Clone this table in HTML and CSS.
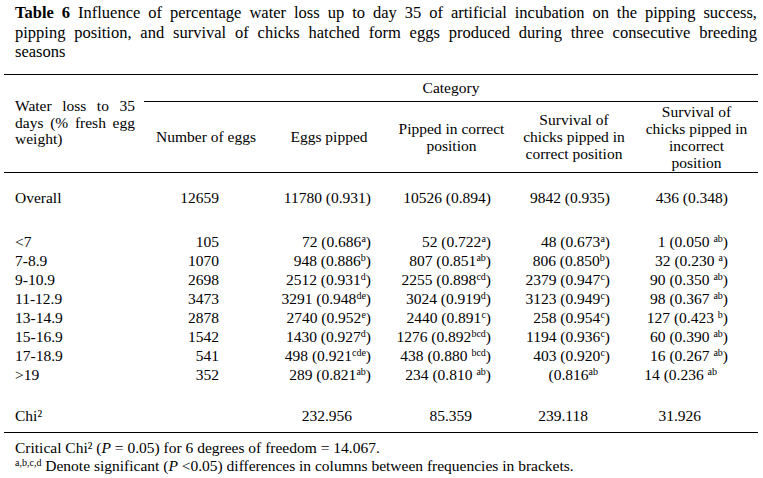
FILE: index.html
```html
<!DOCTYPE html>
<html>
<head>
<meta charset="utf-8">
<link rel="stylesheet" href="styles.css">
</head>
<body>
<div class="caption">
  <div class="jl"><b>Table 6</b> Influence of percentage water loss up to day 35 of artificial incubation on the pipping success,</div>
  <div class="jl">pipping position, and survival of chicks hatched form eggs produced during three consecutive breeding</div>
  <div>seasons</div>
</div>
<div class="table">
  <div class="head">
    <div class="h-first">
      <div class="jl">Water loss to 35</div>
      <div class="jl">days (% fresh egg</div>
      <div>weight)</div>
    </div>
    <div class="h-cat">Category</div>
    <div class="h">Number of eggs</div>
    <div class="h">Eggs pipped</div>
    <div class="h">Pipped in correct<br>position</div>
    <div class="h">Survival of<br>chicks pipped in<br>correct position</div>
    <div class="h">Survival of<br>chicks pipped in<br>incorrect<br>position</div>
  </div>
  <div class="body">
    <div class="row overall"><div>Overall</div><div>12659</div><div>11780 (0.931)</div><div>10526 (0.894)</div><div>9842 (0.935)</div><div>436 (0.348)</div></div>
    <div class="row"><div>&lt;7</div><div>105</div><div>72 (0.686<sup class="s">a</sup>)</div><div>52 (0.722<sup class="s">a</sup>)</div><div>48 (0.673<sup class="s">a</sup>)</div><div>1 (0.050 <sup class="s">ab</sup>)</div></div>
    <div class="row"><div>7-8.9</div><div>1070</div><div>948 (0.886<sup class="s">b</sup>)</div><div>807 (0.851<sup class="s">ab</sup>)</div><div>806 (0.850<sup class="s">b</sup>)</div><div>32 (0.230 <sup class="s">a</sup>)</div></div>
    <div class="row"><div>9-10.9</div><div>2698</div><div>2512 (0.931<sup class="s">d</sup>)</div><div>2255 (0.898<sup class="s">cd</sup>)</div><div>2379 (0.947<sup class="s">c</sup>)</div><div>90 (0.350 <sup class="s">ab</sup>)</div></div>
    <div class="row"><div>11-12.9</div><div>3473</div><div>3291 (0.948<sup class="s">de</sup>)</div><div>3024 (0.919<sup class="s">d</sup>)</div><div>3123 (0.949<sup class="s">c</sup>)</div><div>98 (0.367 <sup class="s">ab</sup>)</div></div>
    <div class="row"><div>13-14.9</div><div>2878</div><div>2740 (0.952<sup class="s">e</sup>)</div><div>2440 (0.891<sup class="s">c</sup>)</div><div>258 (0.954<sup class="s">c</sup>)</div><div>127 (0.423 <sup class="s">b</sup>)</div></div>
    <div class="row"><div>15-16.9</div><div>1542</div><div>1430 (0.927<sup class="s">d</sup>)</div><div>1276 (0.892<sup class="s">bcd</sup>)</div><div>1194 (0.936<sup class="s">c</sup>)</div><div>60 (0.390 <sup class="s">ab</sup>)</div></div>
    <div class="row"><div>17-18.9</div><div>541</div><div>498 (0.921<sup class="s">cde</sup>)</div><div>438 (0.880 <sup class="s">bcd</sup>)</div><div>403 (0.920<sup class="s">c</sup>)</div><div>16 (0.267 <sup class="s">ab</sup>)</div></div>
    <div class="row"><div>&gt;19</div><div>352</div><div>289 (0.821<sup class="s">ab</sup>)</div><div>234 (0.810 <sup class="s">ab</sup>)</div><div class="open5">(0.816<sup class="s">ab</sup></div><div class="open6">14 (0.236 <sup class="s">ab</sup></div></div>
    <div class="row chi"><div>Chi²</div><div></div><div>232.956</div><div>85.359</div><div>239.118</div><div>31.926</div></div>
  </div>
</div>
<div class="foot">
  <div>Critical Chi² (<i>P</i> = 0.05) for 6 degrees of freedom = 14.067.</div>
  <div><sup class="fs">a,b,c,d</sup> Denote significant (<i>P</i> &lt;0.05) differences in columns between frequencies in brackets.</div>
</div>
</body>
</html>
```
FILE: styles.css
```css
body {
  margin: 0;
  width: 763px;
  background: #fff;
  color: #000;
  font-family: "Liberation Serif", "Times New Roman", serif;
}

.caption {
  padding: 3px 6px 0 15px;
  font-size: 16.5px;
  line-height: 19.5px;
}

.jl {
  text-align: justify;
  text-align-last: justify;
}

.table {
  margin: 12px 0 0 4px;
  width: 754px;
  font-size: 15.5px;
}

.head {
  display: grid;
  grid-template-columns: 140px 124px 122px 123px 122px 123px;
  grid-template-rows: 27px 70px;
  border-top: 1px solid #000;
  border-bottom: 1px solid #000;
}

.h-first {
  grid-column: 1;
  grid-row: 1 / span 2;
  display: flex;
  flex-direction: column;
  justify-content: center;
  padding: 0 9px 0 11px;
  line-height: 16.5px;
  white-space: nowrap;
}

.h-cat {
  grid-column: 2 / span 5;
  grid-row: 1;
  border-bottom: 1px solid #000;
  text-align: center;
  line-height: 26px;
}

.h {
  grid-row: 2;
  display: flex;
  align-items: center;
  justify-content: center;
  text-align: center;
  line-height: 17px;
  white-space: nowrap;
}

.body {
  padding: 15px 0 7px;
  border-bottom: 1px solid #000;
}

.row {
  display: grid;
  grid-template-columns: 140px 124px 122px 123px 122px 123px;
  height: 19px;
  line-height: 19px;
  white-space: nowrap;
}

.row > div {
  text-align: right;
}

.row > div:nth-child(1) {
  text-align: left;
  padding-left: 11px;
}

.row > div:nth-child(2) { padding-right: 49px; }
.row > div:nth-child(3) { padding-right: 19px; }
.row > div:nth-child(4) { padding-right: 22px; }
.row > div:nth-child(5) { padding-right: 25px; }
.row > div:nth-child(6) { padding-right: 30px; }

.row > div.open5 { padding-right: 37px; }
.row > div.open6 { padding-right: 41px; }

.overall {
  margin-bottom: 25px;
}

.chi {
  margin-top: 22px;
}

.chi > div:nth-child(3) { padding-right: 38px; }
.chi > div:nth-child(4) { padding-right: 41px; }
.chi > div:nth-child(5) { padding-right: 47px; }
.chi > div:nth-child(6) { padding-right: 57px; }

.s {
  font-size: 10px;
  line-height: 0;
  vertical-align: 5px;
}

.foot {
  padding: 6px 0 0 15px;
  font-size: 15.5px;
  line-height: 18px;
}

.fs {
  font-size: 10px;
  line-height: 0;
  vertical-align: 5px;
}
```
